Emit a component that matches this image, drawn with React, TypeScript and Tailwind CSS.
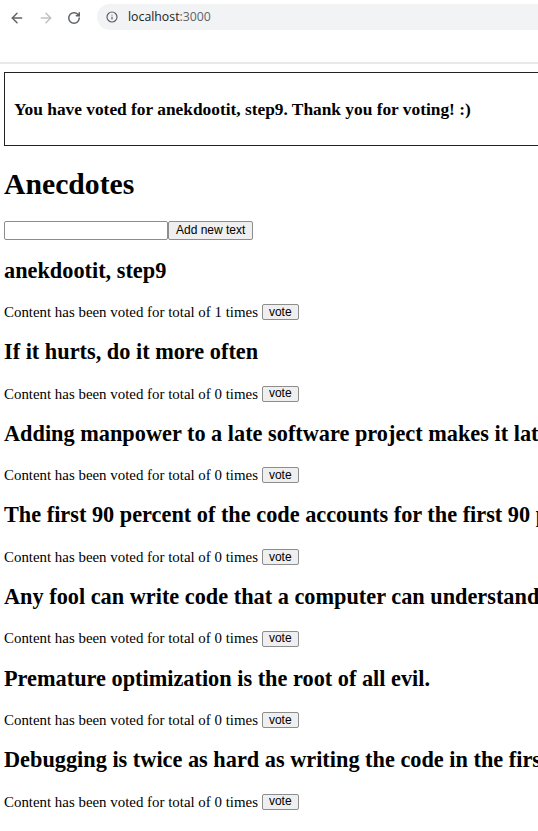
import React from "react";
import { ArrowLeft, ArrowRight, RotateCw, Info } from "lucide-react";

const anecdotes: { text: string; votes: number }[] = [
  { text: "anekdootit, step9", votes: 1 },
  { text: "If it hurts, do it more often", votes: 0 },
  { text: "Adding manpower to a late software project makes it later!", votes: 0 },
  {
    text: "The first 90 percent of the code accounts for the first 90 percent of the development time...The remaining 10 percent of the code accounts for the other 90 percent of the development time.",
    votes: 0,
  },
  {
    text: "Any fool can write code that a computer can understand. Good programmers write code that humans can understand.",
    votes: 0,
  },
  { text: "Premature optimization is the root of all evil.", votes: 0 },
  {
    text: "Debugging is twice as hard as writing the code in the first place. Therefore, if you write the code as cleverly as possible, you are, by definition, not smart enough to debug it.",
    votes: 0,
  },
];

function BrowserBar() {
  return (
    <div className="h-[64px] flex flex-col bg-white">
      <div className="h-[35px] flex items-center">
        <div className="w-[97px] flex items-center shrink-0">
          <ArrowLeft className="ml-[9px] text-[#5f6368]" size={16} strokeWidth={2.2} />
          <ArrowRight className="ml-[13px] text-[#bdc1c6]" size={16} strokeWidth={2.2} />
          <RotateCw className="ml-[13px] text-[#5f6368]" size={14} strokeWidth={2.6} />
        </div>
        <div className="flex-1 h-[26px] mt-[-1px] rounded-l-full bg-[#f1f3f4] flex items-center">
          <Info className="ml-[9px] text-[#5f6368]" size={12} strokeWidth={2.4} />
          <span
            className="ml-[10px] text-[12.3px] leading-none text-[#202124]"
            style={{ fontFamily: '"Open Sans", "Noto Sans", sans-serif' }}
          >
            localhost<span className="text-[#5f6368]">:3000</span>
          </span>
        </div>
      </div>
      <div className="flex-1" />
      <div className="h-[2px] bg-[#e9e9e9]" />
    </div>
  );
}

export default function App() {
  return (
    <div
      className="w-[538px] h-[831px] overflow-hidden bg-white text-black"
      style={{ fontFamily: '"Liberation Serif", "Times New Roman", serif' }}
    >
      <BrowserBar />
      <div className="pl-[4px] pt-[8px] w-[1400px]">
        <div className="w-[1000px] border border-[#222] pl-[9px] pt-[28px] pb-[25px]">
          <h3 className="text-[17.35px] leading-[18.65px] font-bold whitespace-nowrap">
            You have voted for anekdootit, step9. Thank you for voting! :)
          </h3>
        </div>
        <h1 className="mt-[22px] text-[29.7px] leading-[32px] font-bold">Anecdotes</h1>
        <form className="mt-[21px] flex items-center h-[19px]" onSubmit={(e) => e.preventDefault()}>
          <input
            className="w-[164px] h-[19px] border border-[#8d8d8d] rounded-[2px] bg-white px-[2px] text-[12px] outline-none"
            style={{ fontFamily: '"Liberation Sans", Arial, sans-serif' }}
          />
          <button
            type="submit"
            className="h-[19px] px-[7px] border border-[#8d8d8d] rounded-[2px] bg-[#efefef] text-[12px] leading-[15px] text-black"
            style={{ fontFamily: '"Liberation Sans", Arial, sans-serif' }}
          >
            Add new text
          </button>
        </form>
        {anecdotes.map((a, i) => (
          <div key={i}>
            <h2 className="mt-[18px] text-[22.3px] leading-[25px] font-bold whitespace-nowrap">{a.text}</h2>
            <div className="mt-[20.6px] h-[18px] flex items-center text-[14.9px] whitespace-nowrap">
              <span>Content has been voted for total of {a.votes} times</span>
              <button
                className="ml-[4px] h-[16px] px-[6px] border border-[#8d8d8d] rounded-[2px] bg-[#efefef] text-[12px] leading-[13px] text-black"
                style={{ fontFamily: '"Liberation Sans", Arial, sans-serif' }}
              >
                vote
              </button>
            </div>
          </div>
        ))}
      </div>
    </div>
  );
}
